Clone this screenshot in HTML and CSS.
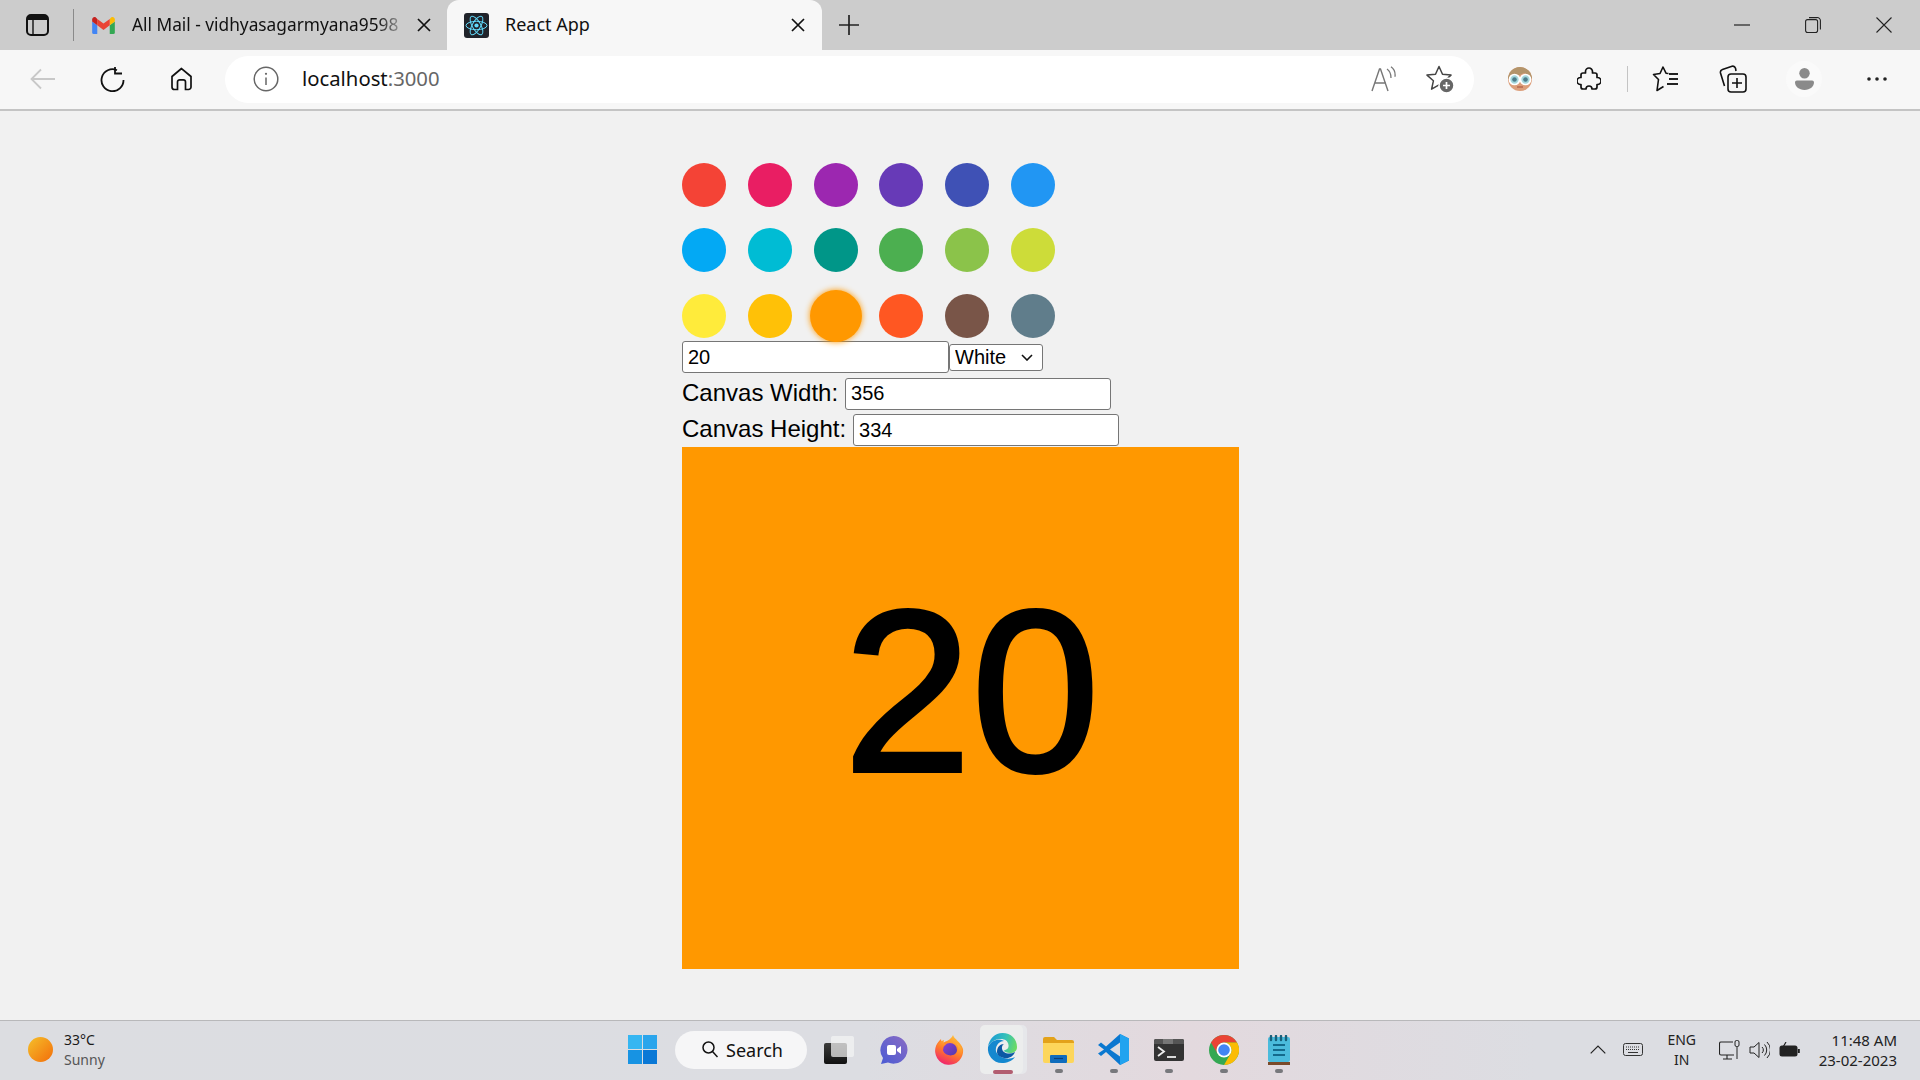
FILE: index.html
```html
<!DOCTYPE html>
<html lang="en">
<head>
<meta charset="utf-8">
<title>React App</title>
<link rel="stylesheet" href="styles.css">
</head>
<body>
<header class="tabstrip">
  <svg class="ic sidebar-ic" viewBox="0 0 23 22"><rect x="1" y="1" width="21" height="20" rx="4" fill="none" stroke="#111" stroke-width="2"/><path d="M2 2h19v4H2z" fill="#111"/><path d="M7 6v14" stroke="#111" stroke-width="1.4"/></svg>
  <span class="tab-divider"></span>
  <div class="tab tab-inactive">
    <svg class="ic gmail" viewBox="0 0 24 18"><path d="M1.6 18h3.8V8.8L0 4.800V16.400A1.600 1.600 0 0 0 1.600 18z" fill="#4285f4"/><path d="M18.600 18h3.800A1.600 1.600 0 0 0 24 16.400V4.800l-5.400 4z" fill="#34a853"/><path d="M18.600 2v6.800L24 4.800V2.600C24 .6 21.700-.6 20.100.6z" fill="#fbbc04"/><path d="M5.400 8.800V2L12 7l6.600-5v6.800L12 13.800z" fill="#ea4335"/><path d="M0 2.600v2.200l5.400 4V2L3.900.6C2.300-.6 0 .6 0 2.600z" fill="#c5221f"/></svg>
    <span class="tab-title fade">All Mail - vidhyasagarmyana9598</span>
    <svg class="ic close-ic" viewBox="0 0 14 14"><path d="M1 1l12 12M13 1L1 13" stroke="#111" stroke-width="1.700"/></svg>
  </div>
  <div class="tab tab-active">
    <svg class="ic react" viewBox="0 0 25 25"><rect width="25" height="25" rx="3" fill="#20232a"/><g fill="none" stroke="#61dafb" stroke-width="1"><ellipse cx="12.500" cy="12.500" rx="10.500" ry="4.200"/><ellipse cx="12.500" cy="12.500" rx="10.500" ry="4.200" transform="rotate(60 12.500 12.500)"/><ellipse cx="12.500" cy="12.500" rx="10.500" ry="4.200" transform="rotate(120 12.500 12.500)"/></g><circle cx="12.500" cy="12.500" r="2.100" fill="#61dafb"/></svg>
    <span class="tab-title">React App</span>
    <svg class="ic close-ic" viewBox="0 0 14 14"><path d="M1 1l12 12M13 1L1 13" stroke="#111" stroke-width="1.700"/></svg>
  </div>
  <svg class="ic plus" viewBox="0 0 20 20"><path d="M10 0v20M0 10h20" stroke="#222" stroke-width="1.700"/></svg>
  <div class="win-controls">
    <svg class="ic win-ic" viewBox="0 0 16 16"><path d="M0 8h16" stroke="#222" stroke-width="1.200"/></svg>
    <svg class="ic win-ic" viewBox="0 0 16 16"><rect x=".6" y="2.600" width="12" height="13" rx="2" fill="none" stroke="#222" stroke-width="1.100"/><path d="M4 .6h8a3 3 0 0 1 3.400 3v9" fill="none" stroke="#222" stroke-width="1.100"/></svg>
    <svg class="ic win-ic" viewBox="0 0 16 16"><path d="M.5.500l15 15M15.500.500l-15 15" stroke="#222" stroke-width="1.100"/></svg>
  </div>
</header>

<nav class="toolbar">
  <svg class="ic back" viewBox="0 0 26 22"><path d="M25 11H2M11 1.500L1.500 11l9.500 9.500" fill="none" stroke="#c8c8c8" stroke-width="1.800"/></svg>
  <svg class="ic reload" viewBox="0 0 25 26"><path d="M17 4.200A11 11 0 1 0 23.500 14" fill="none" stroke="#111" stroke-width="1.800"/><path d="M15 1v6.500h7" fill="none" stroke="#111" stroke-width="1.800"/></svg>
  <svg class="ic home" viewBox="0 0 23 24"><path d="M11.500 1.500L2 9.500V20a2.500 2.500 0 0 0 2.500 2.500h3V15a2.200 2.200 0 0 1 2.200-2.200h3.600A2.200 2.200 0 0 1 15.500 15v7.500h3A2.500 2.500 0 0 0 21 20V9.500z" fill="none" stroke="#111" stroke-width="1.700"/></svg>
  <div class="address">
    <svg class="ic info" viewBox="0 0 26 26"><circle cx="13" cy="13" r="11.800" fill="none" stroke="#666" stroke-width="1.500"/><path d="M13 11.500V19" stroke="#666" stroke-width="1.500"/><circle cx="13" cy="7.800" r="1.100" fill="#666"/></svg>
    <span class="url">localhost<span class="url-port">:3000</span></span>
    <svg class="ic aloud" viewBox="0 0 26 26"><path d="M2 25L9.500 3h1L18 25M5 17h11" fill="none" stroke="#777" stroke-width="1.400"/><path d="M17 3c3 2 4 5 4 9M21 .800c3 2 4.500 5.500 4 10" fill="none" stroke="#777" stroke-width="1.300"/></svg>
    <svg class="ic addfav" viewBox="0 0 28 28"><path d="M13 1.500l3.500 7.800 8.500.8-6.400 5.700 1.800 8.400L13 19.900l-7.400 4.300 1.800-8.400L1 10.100l8.500-.8z" fill="none" stroke="#444" stroke-width="1.500" stroke-linejoin="round"/><circle cx="20.500" cy="20.500" r="7.500" fill="#666" stroke="#fff" stroke-width="1.500"/><path d="M20.500 17v7M17 20.500h7" stroke="#fff" stroke-width="1.700"/></svg>
  </div>
  <svg class="ic avatar" viewBox="0 0 24 24"><circle cx="12" cy="12" r="12" fill="#dc9f7b"/><path d="M0 12A12 12 0 0 1 24 12c-2-3-5-5-8-6-3 2-9 3-12 4z" fill="#b3946b"/><circle cx="6.500" cy="12.500" r="5" fill="#a4d8de" stroke="#fff" stroke-width="1.700"/><circle cx="17.500" cy="12.500" r="5" fill="#a4d8de" stroke="#fff" stroke-width="1.700"/><circle cx="6.500" cy="12.500" r="2.300" fill="#4d7b8a"/><circle cx="17.500" cy="12.500" r="2.300" fill="#4d7b8a"/><path d="M9 20h6" stroke="#b5654c" stroke-width="1.400"/></svg>
  <svg class="ic puzzle" viewBox="0 0 24 24"><path d="M8.500 4.500a3.500 3.500 0 0 1 7 0V6H18a2 2 0 0 1 2 2v2.500h.5a3.500 3.500 0 0 1 0 7H20V20a2 2 0 0 1-2 2h-3a3 3 0 0 0-6 0H6a2 2 0 0 1-2-2v-2.500h-.5a3.500 3.500 0 0 1 0-7H4V8a2 2 0 0 1 2-2h2.500z" fill="none" stroke="#111" stroke-width="1.700" stroke-linejoin="round"/></svg>
  <span class="tool-divider"></span>
  <svg class="ic favs" viewBox="0 0 26 26"><path d="M16.500 7.500L14 7.200 11 1 8 7.500 1.500 8.500l5 5L5 24.500l6.500-4" fill="none" stroke="#111" stroke-width="1.600" stroke-linejoin="round"/><path d="M17 8h9M17 13h9M15 18h11" stroke="#222" stroke-width="1.800"/></svg>
  <svg class="ic collect" viewBox="0 0 28 28"><rect x="9" y="9" width="18" height="18" rx="3" fill="none" stroke="#111" stroke-width="1.600"/><path d="M5.500 21L1.500 8a3 3 0 0 1 2-3.500L13 1.200a3 3 0 0 1 3.500 2L17 6" fill="none" stroke="#111" stroke-width="1.600"/><path d="M18 13v10M13 18h10" stroke="#111" stroke-width="1.600"/></svg>
  <span class="profile"><svg class="ic profile-ic" viewBox="0 0 20 23"><circle cx="10" cy="5.500" r="5.500" fill="#8a8a8a"/><path d="M0 15a2 2 0 0 1 2-2h16a2 2 0 0 1 2 2c0 4.500-4 8-10 8S0 19.500 0 15z" fill="#8a8a8a"/></svg></span>
  <svg class="ic dots" viewBox="0 0 20 4"><circle cx="2" cy="2" r="1.800" fill="#222"/><circle cx="10" cy="2" r="1.800" fill="#222"/><circle cx="18" cy="2" r="1.800" fill="#222"/></svg>
</nav>

<main class="page">
  <div class="swatches">
    <span class="swatch c-red"></span><span class="swatch c-pink"></span><span class="swatch c-purple"></span><span class="swatch c-deep"></span><span class="swatch c-indigo"></span><span class="swatch c-blue"></span>
    <span class="swatch c-lblue"></span><span class="swatch c-cyan"></span><span class="swatch c-teal"></span><span class="swatch c-green"></span><span class="swatch c-lgreen"></span><span class="swatch c-lime"></span>
    <span class="swatch c-yellow"></span><span class="swatch c-amber"></span><span class="swatch c-orange selected"></span><span class="swatch c-dorange"></span><span class="swatch c-brown"></span><span class="swatch c-grey"></span>
  </div>
  <div class="row row-first">
    <input class="field" type="text" value="20">
    <div class="picker-wrap">
      <select class="picker"><option>White</option></select>
      <svg class="picker-arrow" viewBox="0 0 12 7"><path d="M1 1l5 5 5-5" fill="none" stroke="#111" stroke-width="1.600"/></svg>
    </div>
  </div>
  <label class="row row-label">Canvas Width:<input class="field" type="text" value="356"></label>
  <label class="row row-label">Canvas Height:<input class="field" type="text" value="334"></label>
  <div class="canvas"><span class="canvas-num">20</span></div>
</main>

<footer class="taskbar">
  <div class="weather">
    <span class="sun"></span>
    <div class="weather-text"><span class="temp">33°C</span><span class="cond">Sunny</span></div>
  </div>
  <div class="apps">
    <svg class="ic start" viewBox="0 0 29 29"><rect width="14" height="14" fill="#35b6f2"/><rect x="15" width="14" height="14" fill="#2aa5ec"/><rect y="15" width="14" height="14" fill="#1793e3"/><rect x="15" y="15" width="14" height="14" fill="#0a78d6"/></svg>
    <div class="search"><svg class="ic search-ic" viewBox="0 0 16 17"><circle cx="6.500" cy="6.500" r="5.500" fill="none" stroke="#111" stroke-width="1.500"/><path d="M10.500 10.500L15.500 16" stroke="#111" stroke-width="1.500"/></svg><span>Search</span></div>
    <svg class="ic taskview" viewBox="0 0 30 28"><defs><linearGradient id="tvg" x1="0" y1="0" x2="0" y2="1"><stop offset="0" stop-color="#3c3c3c"/><stop offset="1" stop-color="#111"/></linearGradient></defs><rect x="0" y="7" width="23" height="21" rx="2" fill="url(#tvg)"/><rect x="7" y="0" width="23" height="21" rx="2" fill="#f4f4f4" fill-opacity=".72"/></svg>
    <svg class="ic teams" viewBox="0 0 29 28"><defs><linearGradient id="tmg" x1="0" y1="1" x2="1" y2="0"><stop offset="0" stop-color="#4a5bd4"/><stop offset="1" stop-color="#8a6cc4"/></linearGradient></defs><path d="M14.500 0A14 14 0 0 1 28.500 14 14 14 0 0 1 9 26.500L2 28l2-6A14 14 0 0 1 14.500 0z" fill="url(#tmg)"/><rect x="8" y="9" width="9" height="10" rx="2" fill="#fff"/><path d="M18 13l4-3v8l-4-3z" fill="#fff"/></svg>
    <svg class="ic firefox" viewBox="0 0 30 30"><defs><linearGradient id="ffg" x1=".8" y1="0" x2=".3" y2="1"><stop offset="0" stop-color="#ffc83a"/><stop offset=".5" stop-color="#ff7a2a"/><stop offset="1" stop-color="#f0246e"/></linearGradient><linearGradient id="ffp" x1="0" y1="0" x2="1" y2="1"><stop offset="0" stop-color="#8a3fd6"/><stop offset="1" stop-color="#4e3aa8"/></linearGradient></defs><path d="M19 0c1 4 8 7 10 14a14 14 0 1 1-27-3c1-3 3-5 5-7 0 2 1 3 2 4 3-2 8-3 10-8z" fill="url(#ffg)"/><circle cx="16" cy="15" r="7" fill="url(#ffp)"/><path d="M2 12C4 8 7 6 10 5c-1 2 0 4 2 5-3 0-4 3-3 6 2 4 8 6 12 3 4-3 4-8 1-11 4 2 7 6 6 10-2 8-10 12-15 11C6 28 1 21 2 12z" fill="url(#ffg)"/></svg>
    <div class="edge-slot">
      <svg class="ic edge" viewBox="0 0 30 30"><defs><linearGradient id="eg" x1="0" y1=".4" x2="1" y2=".6"><stop offset="0" stop-color="#1a9ad8"/><stop offset=".55" stop-color="#35c1b8"/><stop offset="1" stop-color="#6ddb62"/></linearGradient></defs><path d="M1 14C2 6 8 0 15.500 0 24 0 30 6 30 14c0 4-3 6-7 6-3 0-5.500-1-6.500-2.500 3.500-.5 5.500-2.500 5-5.500C21 8 18 6 14 6 8 6 3 9 1 14z" fill="url(#eg)"/><path d="M1 14C0 22 6 30 15 30c5 0 10-2 13-6-4 2-8 2-11 1-6-2-9-6-8-10 1-4 4-7 8-7C12 5 4 7 1 14z" fill="#1488cf"/><path d="M10 19c0-5 3-8 7-8-3 2-2.500 6 0 8 3 2 7 2 11 0-2 5-7 7-11 6-4-1-7-3-7-6z" fill="#0c59a4"/></svg>
      <span class="run run-active"></span>
    </div>
    <div class="app-slot">
      <svg class="ic explorer" viewBox="0 0 31 26"><path d="M0 2a2 2 0 0 1 2-2h9l3 3h15a2 2 0 0 1 2 2v3H0z" fill="#e3a21a"/><path d="M0 6h31v18a2 2 0 0 1-2 2H2a2 2 0 0 1-2-2z" fill="#fdd65b"/><rect x="7" y="18" width="17" height="8" rx="1" fill="#0f6cbd"/><path d="M11 21.500h9" stroke="#0a3f7a" stroke-width="1.200"/></svg>
      <span class="run"></span>
    </div>
    <div class="app-slot">
      <svg class="ic vscode" viewBox="0 0 31 31"><path d="M22 0l9 4.500v22L22 31 8 18l-5 4-3-2.500L6 15.500 0 11l3-2.500 5 4z" fill="#0a78d0"/><path d="M22 0l9 4.500v22L22 31z" fill="#22a3ef"/><path d="M22 8.500L12 15.500l10 7z" fill="#dcdde2"/></svg>
      <span class="run"></span>
    </div>
    <div class="app-slot">
      <svg class="ic terminal" viewBox="0 0 30 22"><rect width="30" height="22" rx="2" fill="#333"/><path d="M2 0h7v5H0V2a2 2 0 0 1 2-2z" fill="#555"/><path d="M9 0h10v5H9z" fill="#777"/><path d="M19 0h9a2 2 0 0 1 2 2v3H19z" fill="#555"/><path d="M4 8l6 4.500-6 4.500" fill="none" stroke="#eee" stroke-width="1.800"/><path d="M13 18h9" stroke="#eee" stroke-width="1.800"/></svg>
      <span class="run"></span>
    </div>
    <div class="app-slot">
      <svg class="ic chrome" viewBox="0 0 30 30"><circle cx="15" cy="15" r="15" fill="#34a853"/><path d="M15 0a15 15 0 0 1 13 7.500H15a7.500 7.500 0 0 0-6.500 11.200L2 7.500A15 15 0 0 1 15 0z" fill="#ea4335"/><path d="M28 7.500A15 15 0 0 1 15 30l6.500-11.300A7.500 7.500 0 0 0 15 7.500z" fill="#fbbc04"/><circle cx="15" cy="15" r="7.500" fill="#fff"/><circle cx="15" cy="15" r="5.800" fill="#4285f4"/></svg>
      <span class="run"></span>
    </div>
    <div class="app-slot">
      <svg class="ic notepad" viewBox="0 0 22 30"><rect y="2" width="22" height="25" rx="2" fill="#4bbbdc"/><rect y="27" width="22" height="3" fill="#7a4a2a"/><path d="M3 1v4M8 1v4M13 1v4M18 1v4" stroke="#17607a" stroke-width="2.400" stroke-linecap="round"/><path d="M5 10h12M5 15h12M5 20h12" stroke="#146a8c" stroke-width="2"/></svg>
      <span class="run"></span>
    </div>
  </div>
  <div class="tray">
    <svg class="ic chevron" viewBox="0 0 16 9"><path d="M.7 8.300L8 1l7.300 7.300" fill="none" stroke="#222" stroke-width="1.200"/></svg>
    <svg class="ic keyboard" viewBox="0 0 20 13"><rect x=".5" y=".5" width="19" height="12" rx="2" fill="none" stroke="#333"/><path d="M3 4h14M3 6.500h14" stroke="#333" stroke-dasharray="1 1"/><path d="M5 9.500h10" stroke="#333"/></svg>
    <div class="lang"><span>ENG</span><span>IN</span></div>
    <svg class="ic monitor" viewBox="0 0 21 20"><path d="M14 2H2a1.500 1.500 0 0 0-1.500 1.500v10A1.500 1.500 0 0 0 2 15h13M8 15v3.500M4 19h9" fill="none" stroke="#222" stroke-width="1.100"/><rect x="16" y=".5" width="4" height="6" rx="1.500" fill="none" stroke="#222"/><path d="M18 6.500V19" stroke="#222"/></svg>
    <svg class="ic volume" viewBox="0 0 21 18"><path d="M1 6h4l5-4.500v15L5 12H1z" fill="none" stroke="#222"/><path d="M13 6a4 4 0 0 1 0 6M15.500 3.500a8 8 0 0 1 0 11M18 1a11 11 0 0 1 0 16" fill="none" stroke="#222"/></svg>
    <svg class="ic battery" viewBox="0 0 21 16"><rect x=".5" y="3.500" width="18" height="11" rx="2.500" fill="#222"/><rect x="18.800" y="7" width="2" height="4" fill="#222"/><path d="M7 0L3 7h4l-2 5" fill="none" stroke="#222" stroke-width="1.200"/></svg>
    <div class="clock"><span>11:48 AM</span><span>23-02-2023</span></div>
  </div>
</footer>
</body>
</html>
```

FILE: styles.css
```css
* { box-sizing: border-box; }
html, body { margin: 0; padding: 0; }
body {
  width: 1920px;
  height: 1080px;
  overflow: hidden;
  display: flex;
  flex-direction: column;
  background: #f1f1f1;
  font-family: "Noto Sans", "Liberation Sans", sans-serif;
}
.ic { display: block; flex: none; }

/* tab strip */
.tabstrip {
  height: 50px;
  flex: none;
  display: flex;
  align-items: center;
  background: #cccccc;
  padding-left: 26px;
}
.sidebar-ic { width: 23px; height: 22px; }
.tab-divider { width: 1px; height: 32px; background: #8a8a8a; margin-left: 24px; }
.tab { display: flex; align-items: center; height: 50px; }
.tab-inactive { width: 373px; padding-left: 18px; }
.gmail { width: 23px; height: 17px; }
.tab-title {
  font-size: 18px;
  color: #111;
  white-space: nowrap;
  margin: 0 0 2px 17px;
}
.fade {
  width: 272px;
  font-size: 17.300px;
  -webkit-mask-image: linear-gradient(90deg, #000 90%, rgba(0, 0, 0, .15));
  mask-image: linear-gradient(90deg, #000 90%, rgba(0, 0, 0, .15));
}
.close-ic { width: 14px; height: 14px; margin-left: auto; }
.tab-inactive .close-ic { margin-right: 16px; }
.tab-active {
  width: 375px;
  padding-left: 17px;
  background: #f7f7f7;
  border-radius: 12px 12px 0 0;
}
.tab-active .close-ic { margin-right: 17px; }
.react { width: 25px; height: 25px; }
.tab-active .tab-title { margin-left: 16px; }
.plus { width: 20px; height: 20px; margin-left: 17px; }
.win-controls { display: flex; align-items: center; margin-left: auto; gap: 55px; padding-right: 28px; }
.win-ic { width: 16px; height: 16px; }

/* toolbar */
.toolbar {
  height: 61px;
  flex: none;
  display: flex;
  align-items: center;
  background: #f7f7f7;
  border-bottom: 2px solid #c4c4c4;
  padding: 0 26px 1px 30px;
}
.back { width: 26px; height: 22px; }
.reload { width: 25px; height: 26px; margin-left: 44px; }
.home { width: 23px; height: 24px; margin-left: 45px; }
.address {
  width: 1249px;
  height: 47px;
  margin-left: 32px;
  display: flex;
  align-items: center;
  background: #fff;
  border-radius: 24px;
  padding-left: 28px;
}
.info { width: 26px; height: 26px; }
.url { font-size: 20.300px; color: #111; margin: 0 0 2px 23px; }
.url-port { color: #666; }
.aloud { width: 26px; height: 26px; margin-left: auto; }
.addfav { width: 28px; height: 28px; margin-left: 30px; margin-right: 20px; }
.avatar { width: 24px; height: 24px; margin-left: 34px; }
.puzzle { width: 24px; height: 24px; margin-left: 45px; }
.tool-divider { width: 1px; height: 26px; background: #c4c4c4; margin-left: 26px; }
.favs { width: 26px; height: 26px; margin-left: 24px; }
.collect { width: 28px; height: 28px; margin-left: 41px; }
.profile {
  width: 36px; height: 36px;
  margin-left: 39px;
  display: flex; align-items: center; justify-content: center;
  border-radius: 50%;
  background: #fafafa;
}
.profile-ic { width: 19px; height: 22px; }
.dots { width: 20px; height: 4px; margin-left: 45px; }

/* page */
.page {
  flex: 1;
  padding: 51.500px 0 0 682px;
}
.swatches {
  display: grid;
  grid-template-columns: repeat(6, 44px);
  grid-auto-rows: 44px;
  gap: 21.800px;
}
.swatch { border-radius: 50%; }
.selected { transform: scale(1.18); box-shadow: 0 0 5px #ff9800; position: relative; }
.c-red { background: #f44336; } .c-pink { background: #e91e63; } .c-purple { background: #9c27b0; }
.c-deep { background: #673ab7; } .c-indigo { background: #3f51b5; } .c-blue { background: #2196f3; }
.c-lblue { background: #03a9f4; } .c-cyan { background: #00bcd4; } .c-teal { background: #009688; }
.c-green { background: #4caf50; } .c-lgreen { background: #8bc34a; } .c-lime { background: #cddc39; }
.c-yellow { background: #ffeb3b; } .c-amber { background: #ffc107; } .c-orange { background: #ff9800; }
.c-dorange { background: #ff5722; } .c-brown { background: #795548; } .c-grey { background: #607d8b; }

.row { display: flex; align-items: center; }
.row-first { margin-top: 3px; }
.row-label {
  align-items: flex-start;
  margin-top: 4.500px;
  font-family: "Liberation Sans", Arial, sans-serif;
  font-size: 24px;
  line-height: 30px;
  color: #000;
  white-space: pre;
}
.field {
  width: 267px;
  height: 32px;
  padding: 0 5px;
  border: 1px solid #767676;
  border-radius: 3px;
  background: #fff;
  font-family: "Liberation Sans", Arial, sans-serif;
  font-size: 20px;
  color: #000;
}
.row-label .field { width: 266px; margin-left: 7px; }
.picker-wrap { position: relative; width: 94px; height: 27px; }
.picker {
  display: block;
  width: 100%;
  height: 100%;
  padding: 0 0 0 5px;
  appearance: none;
  -webkit-appearance: none;
  border: 1px solid #767676;
  border-radius: 3px;
  background: #fff;
  font-family: "Liberation Sans", Arial, sans-serif;
  font-size: 20px;
  color: #000;
}
.picker-arrow {
  position: absolute;
  right: 10px;
  top: 10px;
  width: 12px;
  height: 7px;
}
.canvas {
  width: 557px;
  height: 522px;
  margin-top: 1px;
  display: flex;
  align-items: center;
  justify-content: center;
  padding: 0 0 32px 22px;
  background: #ff9800;
}
.canvas-num {
  font-family: "Liberation Sans", Arial, sans-serif;
  font-size: 230px;
  line-height: 1;
  color: #000;
  -webkit-text-stroke: 4px #000;
}

/* taskbar */
.taskbar {
  height: 60px;
  flex: none;
  display: flex;
  align-items: center;
  background: linear-gradient(90deg, #dcdde1 0%, #dcdde2 45%, #e3d9de 62%, #dcdde2 80%);
  border-top: 1px solid #b8b8ba;
  padding: 0 0 2px 28px;
}
.weather { display: flex; align-items: center; width: 600px; }
.sun {
  width: 25px; height: 25px;
  border-radius: 50%;
  background: linear-gradient(135deg, #f5c02a, #f36d0a);
}
.weather-text { display: flex; flex-direction: column; margin-left: 11px; font-size: 14px; line-height: 20px; }
.temp { color: #1a1a1a; }
.cond { color: #555; }
.apps { display: flex; align-items: center; }
.start { width: 29px; height: 29px; }
.search {
  width: 132px;
  height: 38px;
  margin-left: 18px;
  display: flex;
  align-items: center;
  gap: 8px;
  padding-left: 27px;
  border-radius: 19px;
  background: #f6f6f7;
  font-size: 18px;
  color: #111;
}
.search-ic { width: 16px; height: 17px; }
.taskview { width: 30px; height: 28px; margin-left: 17px; }
.teams { width: 29px; height: 28px; margin-left: 25px; }
.firefox { width: 30px; height: 30px; margin-left: 26px; }
.edge-slot {
  width: 43px;
  height: 49px;
  margin: 0 2px 0 16px;
  display: flex;
  flex-direction: column;
  align-items: center;
  padding-top: 8px;
  background: #eceded;
  border-radius: 5px;
  box-shadow: 4px 0 0 #e6e7ea;
  position: relative;
}
.edge { width: 30px; height: 30px; }
.app-slot {
  width: 31px;
  height: 49px;
  margin-left: 24px;
  display: flex;
  flex-direction: column;
  align-items: center;
  justify-content: center;
  position: relative;
}
.edge-slot + .app-slot { margin-left: 18px; }
.run {
  position: absolute;
  bottom: 1px;
  width: 8px;
  height: 4px;
  border-radius: 2px;
  background: #77787c;
}
.run-active { width: 20px; background: #b25d70; left: 13px; bottom: 0; }
.explorer { width: 31px; height: 26px; }
.vscode { width: 31px; height: 31px; }
.terminal { width: 30px; height: 22px; }
.chrome { width: 30px; height: 30px; }
.notepad { width: 22px; height: 30px; }

.tray { display: flex; align-items: center; margin-left: auto; padding-right: 23px; font-size: 14px; color: #222; }
.chevron { width: 16px; height: 9px; }
.keyboard { width: 20px; height: 13px; margin-left: 17px; }
.lang { display: flex; flex-direction: column; align-items: center; margin-left: 24px; line-height: 20px; }
.monitor { width: 21px; height: 20px; margin-left: 23px; }
.volume { width: 21px; height: 18px; margin-left: 9px; }
.battery { width: 21px; height: 16px; margin-left: 9px; }
.clock { display: flex; flex-direction: column; align-items: flex-end; width: 97px; font-size: 15px; line-height: 20px; }
```
